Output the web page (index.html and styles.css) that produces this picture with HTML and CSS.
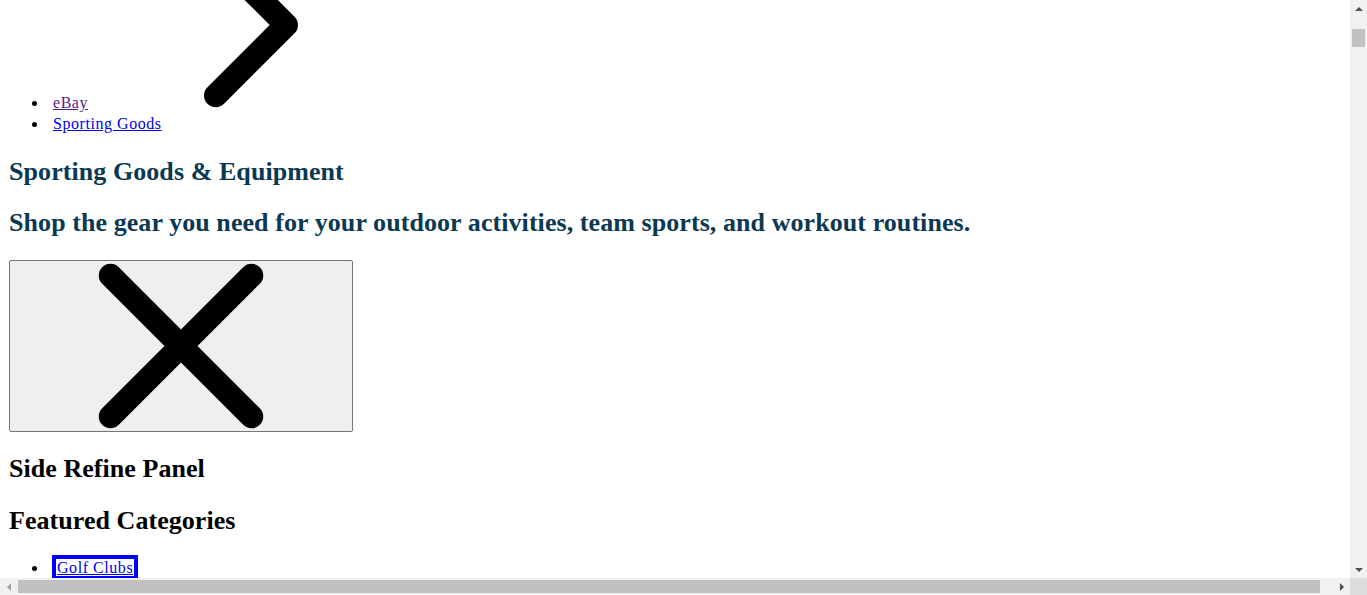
FILE: index.html
```html
<!DOCTYPE html>
<html lang="en">
<head>
<meta charset="utf-8">
<title>Sporting Goods &amp; Equipment | eBay</title>
<link rel="stylesheet" href="styles.css">
</head>
<body>
<nav class="crumbs" aria-label="Breadcrumb">
  <svg class="crumb-chevron" viewBox="0 9.872 24 14.128" preserveAspectRatio="none" fill="none" stroke="#000" stroke-width="2" stroke-linecap="round" stroke-linejoin="round" aria-hidden="true"><path d="M9 18l6-6-6-6"/></svg>
  <ul class="crumb-list">
    <li class="crumb"><a class="crumb-link visited" href="#">eBay</a></li>
    <li class="crumb"><a class="crumb-link" href="#">Sporting Goods</a></li>
  </ul>
</nav>
<main class="page">
  <h2 class="title">Sporting Goods &amp; Equipment</h2>
  <h2 class="title">Shop the gear you need for your outdoor activities, team sports, and workout routines.</h2>
  <button class="close-btn" type="button" aria-label="Close"><svg class="close-icon" viewBox="-2.043 4.851 28.085 14.298" preserveAspectRatio="none" fill="none" stroke="#000" stroke-width="2" stroke-linecap="round" stroke-linejoin="round"><path d="M18 6L6 18M6 6l12 12"/></svg></button>
  <h2 class="section">Side Refine Panel</h2>
  <h2 class="section">Featured Categories</h2>
  <ul class="cat-list">
    <li class="cat"><a class="cat-link focused" href="#">Golf Clubs</a></li>
  </ul>
</main>

<div class="sb-v" aria-hidden="true">
  <div class="sb-btn"><span class="arr arr-up"></span></div>
  <div class="sb-track-v"><div class="sb-thumb-v"></div></div>
  <div class="sb-btn"><span class="arr arr-down"></span></div>
</div>
<div class="sb-h" aria-hidden="true">
  <div class="sb-btn-h"><span class="arr arr-left"></span></div>
  <div class="sb-track-h"><div class="sb-thumb-h"></div></div>
  <div class="sb-btn-h"><span class="arr arr-right"></span></div>
  <div class="sb-corner"></div>
</div>
</body>
</html>
```

FILE: styles.css
```css
html {
  background: #fff;
}

body {
  margin: 0 8px 8px;
  font-family: "Liberation Serif", "Times New Roman", serif;
  font-size: 16px;
  color: #000;
}

.crumbs {
  position: relative;
  padding-top: 76px;
}

.crumb-list {
  margin: 16px 0;
  padding-left: 40px;
}

.crumb {
  line-height: 21px;
}

.crumb-link {
  margin-left: 5px;
  color: #0000ee;
  letter-spacing: 0.55px;
}

.crumb-link.visited {
  color: #551a8b;
}

.crumb-chevron {
  position: absolute;
  left: 102px;
  top: 0;
  width: 282px;
  height: 166px;
}

.page {
  display: block;
  padding-left: 1px;
}

.title,
.section {
  font-size: 26px;
  font-weight: bold;
  margin: 0.83em 0;
}

.page > .title:first-child {
  margin-top: calc(0.83em + 1px);
}

.title {
  color: #0b3953;
  letter-spacing: 0.07px;
}

.section {
  color: #000;
  letter-spacing: 0.05px;
}

.page > .section:nth-of-type(3) {
  margin-top: calc(0.83em + 1px);
}

.close-btn {
  display: block;
  padding: 1px 6px;
  border: 1px solid #767676;
  border-radius: 2px;
  background: #efefef;
}

.close-icon {
  display: block;
  width: 330px;
  height: 168px;
}

.cat-list {
  margin: 16px 0;
  padding-left: 39px;
}

.cat {
  line-height: 21px;
}

.cat-link {
  margin-left: 4px;
  padding: 0 1px;
  border: 4px solid #0000ff;
  color: #0000ee;
  letter-spacing: 0.55px;
}

/* imitation of the classic browser scrollbars shown in the capture */
.sb-v {
  position: fixed;
  top: 0;
  right: 0;
  width: 17px;
  height: 578px;
  background: #f1f1f1;
  display: flex;
  flex-direction: column;
}

.sb-btn {
  height: 17px;
  display: flex;
  align-items: center;
  justify-content: center;
}

.sb-track-v {
  flex: 1;
  padding: 12px 2px 0;
}

.sb-thumb-v {
  height: 18px;
  background: #c1c1c1;
}

.sb-h {
  position: fixed;
  left: 0;
  bottom: 0;
  width: 100%;
  height: 17px;
  background: #f1f1f1;
  display: flex;
}

.sb-btn-h {
  width: 17px;
  display: flex;
  align-items: center;
  justify-content: center;
}

.sb-track-h {
  flex: 1;
  padding: 2px 13px 2px 1px;
}

.sb-thumb-h {
  height: 13px;
  background: #c1c1c1;
}

.sb-corner {
  width: 17px;
  background: #dcdcdc;
}

.arr {
  width: 0;
  height: 0;
  border-style: solid;
}

.arr-up {
  border-width: 0 4px 4px;
  border-color: transparent transparent #505050;
}

.arr-down {
  border-width: 4px 4px 0;
  border-color: #505050 transparent transparent;
}

.arr-left {
  border-width: 4px 4px 4px 0;
  border-color: transparent #a3a3a3 transparent transparent;
}

.arr-right {
  border-width: 4px 0 4px 4px;
  border-color: transparent transparent transparent #505050;
}
```
